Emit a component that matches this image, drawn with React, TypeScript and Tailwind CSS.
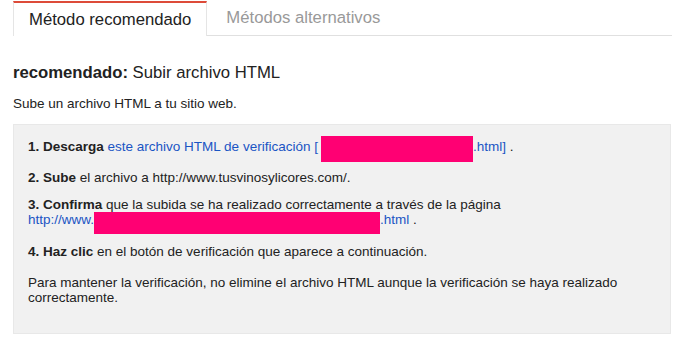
export default function App() {
  return (
    <div className="w-[700px] h-[344px] bg-white text-[#222] font-['Liberation_Sans',Arial,sans-serif]">
      {/* Tabs */}
      <div className="flex pt-px pl-[13px] w-[672px]">
        <div className="h-[35px] px-[15px] flex items-center border-t-2 border-t-[#dd4b39] border-x border-x-[#e5e5e5] bg-white text-[16.7px] text-[#222]">
          Método recomendado
        </div>
        <div className="flex-1 h-[35px] pl-[19px] flex items-center border-b border-[#e0e0e0] text-[16.7px] text-[#999]">
          Métodos alternativos
        </div>
      </div>

      <div className="px-[13px]">
        <h2 className="mt-[27px] text-[16.7px] leading-[20px]">
          <span className="font-bold">recomendado:</span> Subir archivo HTML
        </h2>

        <p className="mt-[13px] text-[13.5px] leading-[16px]">Sube un archivo HTML a tu sitio web.</p>

        {/* Steps */}
        <div className="mt-[12px] w-[658px] bg-[#f1f1f1] border border-[#e8e8e8] pl-[14px] pt-[14px] pb-[28px] text-[13.5px] leading-[15px]">
          <p>
            <span className="font-bold">1. Descarga</span>{" "}
            <span className="text-[#1a55c4]">
              este archivo HTML de verificación [
              <span className="inline-block w-[152px] h-[26px] -my-[6px] ml-[3px] align-middle relative top-[2px] bg-[#ff0073]" />
              .html]
            </span>{" "}
            .
          </p>
          <p className="mt-[16px]">
            <span className="font-bold">2. Sube</span> el archivo a http://www.tusvinosylicores.com/.
          </p>
          <p className="mt-[12px]">
            <span className="font-bold">3. Confirma</span> que la subida se ha realizado correctamente a través de la página
            <br />
            <span className="text-[#1a55c4]">
              http://www.
              <span className="inline-block w-[286px] h-[22px] -my-[4px] align-middle relative top-[2px] bg-[#ff0073]" />
              .html
            </span>{" "}
            .
          </p>
          <p className="mt-[16px]">
            <span className="font-bold">4. Haz clic</span> en el botón de verificación que aparece a continuación.
          </p>
          <p className="mt-[16px]">
            Para mantener la verificación, no elimine el archivo HTML aunque la verificación se haya realizado
            <br />
            correctamente.
          </p>
        </div>
      </div>
    </div>
  );
}
